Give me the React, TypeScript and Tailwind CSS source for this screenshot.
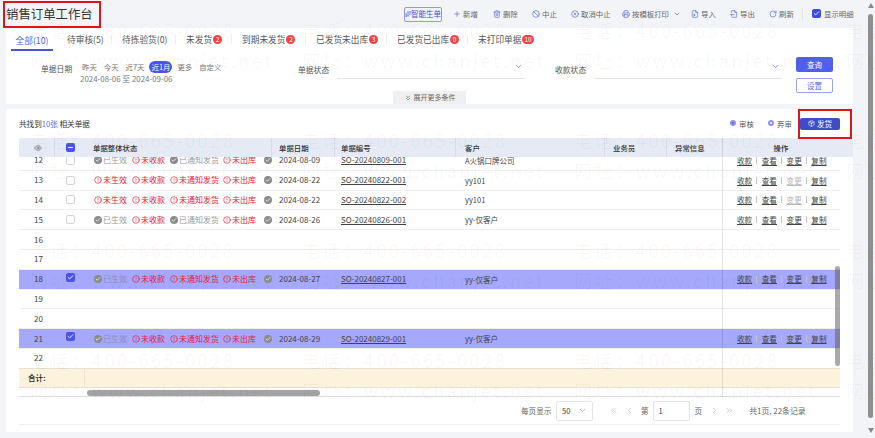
import React from 'react';
import {
  Ban,
  ChevronDown,
  ChevronLeft,
  ChevronRight,
  ChevronsDown,
  ChevronsLeft,
  ChevronsRight,
  CircleAlert,
  CircleX,
  Eye,
  FileInput,
  FileOutput,
  Minus,
  Check,
  Package,
  Plus,
  Printer,
  RotateCw,
  Sparkles,
  Trash2,
} from 'lucide-react';

const font = { fontFamily: '"Noto Sans CJK SC", "Noto Sans", sans-serif' };

const tools = [
  { label: '新增', icon: Plus, w: 'w-[40px]' },
  { label: '删除', icon: Trash2, w: 'w-[39px]' },
  { label: '中止', icon: Ban, w: 'w-[39px]' },
  { label: '取消中止', icon: CircleX, w: 'w-[51px]' },
  { label: '按模板打印', icon: Printer, w: 'w-[69px]', more: true },
  { label: '导入', icon: FileInput, w: 'w-[39px]' },
  { label: '导出', icon: FileOutput, w: 'w-[39px]' },
  { label: '刷新', icon: RotateCw, w: 'w-[33px]' },
];

const tabs = [
  { label: '待审核(5)', w: 'w-[55px]' },
  { label: '待拣验货(0)', w: 'w-[64px]' },
  { label: '未发货', badge: '2', w: 'w-[56px]' },
  { label: '到期未发货', badge: '2', w: 'w-[74px]' },
  { label: '已发货未出库', badge: '3', w: 'w-[81px]' },
  { label: '已发货已出库', badge: '0', w: 'w-[81px]' },
  { label: '未打印单据', badge: '10', w: 'w-[70px]' },
];

type Row = {
  no: number;
  checked?: boolean;
  status?: [boolean, boolean, boolean, boolean];
  date?: string;
  code?: string;
  customer?: string;
  changeOff?: boolean;
};

const rows: Row[] = [
  { no: 12, status: [true, false, true, false], date: '2024-08-09', code: 'SO-20240809-001', customer: 'A火锅口牌公司' },
  { no: 13, status: [false, false, false, false], date: '2024-08-22', code: 'SO-20240822-001', customer: 'yy101', changeOff: true },
  { no: 14, status: [false, false, false, false], date: '2024-08-22', code: 'SO-20240822-002', customer: 'yy101', changeOff: true },
  { no: 15, status: [true, false, true, false], date: '2024-08-26', code: 'SO-20240826-001', customer: 'yy-仅客户' },
  { no: 16 },
  { no: 17 },
  { no: 18, checked: true, status: [true, false, false, false], date: '2024-08-27', code: 'SO-20240827-001', customer: 'yy-仅客户' },
  { no: 19 },
  { no: 20 },
  { no: 21, checked: true, status: [true, false, false, false], date: '2024-08-29', code: 'SO-20240829-001', customer: 'yy-仅客户' },
  { no: 22 },
];

const statusNames = ['生效', '收款', '通知发货', '出库'];
const statusWidths = ['w-[38px]', 'w-[38px]', 'w-[53px]', 'w-[41px]'];
const cols = 'grid grid-cols-[36px_30px_187px_63px_121px_149px_62px_55px_118px]';

const DoneDot = () => (
  <span className="flex size-[8px] shrink-0 items-center justify-center rounded-full bg-[#8c8c8c]">
    <Check size={6} strokeWidth={3} className="text-white" />
  </span>
);

const StatusCell = ({ row }: { row: Row }) => (
  <div className="flex items-center pl-[9px]">
    {row.status?.map((done, i) => (
      <span key={i} className={`flex items-center gap-[1px] ${statusWidths[i]}`}>
        {done ? <DoneDot /> : <CircleAlert size={8} className="shrink-0 text-[#e5203a]" />}
        <span className={done ? (row.checked ? 'text-[#8c8cc0]' : 'text-[#9a9a9a]') : 'text-[#e5203a]'}>
          {(done ? '已' : '未') + statusNames[i]}
        </span>
      </span>
    ))}
    {row.status && <DoneDot />}
  </div>
);

const Sep = () => <span className="h-[7px] w-px bg-[#c4c4c4]" />;

const TableRow = ({ row }: { row: Row }) => (
  <div
    className={`${cols} h-[19.8px] shrink-0 items-center text-[8px] text-[#444] border-b border-[#efefef] first:-mt-[6px] ${
      row.checked ? 'bg-[#a6a8fb]' : 'bg-white'
    }`}
  >
    <span className="pl-[15px]">{row.no}</span>
    <span className="pl-[11px]">
      {row.checked ? (
        <span className="flex size-[9px] -translate-y-[2px] items-center justify-center rounded-[2px] bg-[#4a55e8]">
          <Check size={7} strokeWidth={3} className="text-white" />
        </span>
      ) : row.code ? (
        <span className="block size-[9px] rounded-[2px] border border-[#d4d4d4] bg-white" />
      ) : null}
    </span>
    <StatusCell row={row} />
    <span className="pl-[7px]">{row.date}</span>
    <span className="pl-[6px] underline">{row.code}</span>
    <span className="pl-[9px] text-[7.5px]">{row.customer}</span>
    <span />
    <span />
    {row.code ? (
      <span className="flex items-center gap-[4.3px] pl-[15px] text-[7.6px]">
        <span className="underline">收款</span>
        <Sep />
        <span className="underline">查看</span>
        <Sep />
        <span className={row.changeOff ? 'underline text-[#b5b5b5]' : 'underline'}>变更</span>
        <Sep />
        <span className="underline">复制</span>
      </span>
    ) : (
      <span />
    )}
  </div>
);

export default function App() {
  return (
    <div className="relative h-[438px] w-[875px] overflow-hidden bg-[#f3f4f7] text-[#444]" style={font}>
      {/* toolbar */}
      <header className="flex h-[28px] items-center pl-[6px]">
        <h1 className="w-[398px] text-[12.4px] text-[#333]">销售订单工作台</h1>
        <button className="flex h-[15px] w-[38px] items-center justify-center rounded-[2px] border border-[#8f97ef] text-[7.5px] text-[#3f4ce0]">
          <Sparkles size={6} />
          智能生单
        </button>
        <div className="ml-[11px] flex items-center text-[7.4px] text-[#666]">
          {tools.map(t => (
            <span key={t.label} className={`flex items-center gap-[2px] ${t.w}`}>
              <t.icon size={8} className="text-[#5a6ae0]" />
              {t.label}
              {t.more && <ChevronDown size={8} className="ml-[2px]" />}
            </span>
          ))}
        </div>
        <span className="h-[12px] w-px bg-[#e3e3e3]" />
        <span className="ml-[9px] flex items-center gap-[3px] text-[7.4px] text-[#666]">
          <span className="flex size-[9px] items-center justify-center rounded-[2px] bg-[#3f4ce0]">
            <Check size={7} strokeWidth={3} className="text-white" />
          </span>
          显示明细
        </span>
      </header>

      {/* filter panel */}
      <section className="relative ml-[6px] h-[76px] w-[847px] bg-white">
        <nav className="flex h-[23px] items-end pl-[5px] text-[8.7px] text-[#555]">
          <span className="h-[22px] w-[42px] border-b-2 border-[#4a55c8] pt-[5px] text-center text-[#4f5fe8]">全部(10)</span>
          <span className="w-[8px]" />
          {tabs.map((t, i) => (
            <span key={t.label} className={`relative flex h-[22px] items-center gap-[1px] pb-[1px] pl-[6px] ${t.w}`}>
              {t.label}
              {t.badge && (
                <span className="flex h-[9px] min-w-[9px] items-center justify-center rounded-full bg-[#ef4444] px-[2px] text-[6.5px] text-white">
                  {t.badge}
                </span>
              )}
              {i < tabs.length - 1 && <span className="absolute right-[4px] top-[6px] h-[9px] w-px bg-[#eeeeee]" />}
            </span>
          ))}
        </nav>
        <div className="flex pt-[10px]">
          <div className="flex w-[284px]">
            <span className="w-[67px] pl-[35px] pt-[2px] text-[7.8px] whitespace-nowrap text-[#555]">单据日期</span>
            <div className="pl-[9px] text-[7.4px] text-[#777]">
              <div className="flex h-[12px] items-center gap-[7px]">
                <span>昨天</span>
                <span>今天</span>
                <span>近7天</span>
                <span className="-mx-[2px] rounded-[6px] bg-[#4a55e8] px-[2px] text-white">近1月</span>
                <span>更多</span>
                <span>自定义</span>
              </div>
              <div className="-ml-[2px] text-[7.9px]">2024-08-06 至 2024-09-06</div>
            </div>
          </div>
          <span className="w-[39px] pl-[8px] pt-[3px] text-[7.8px] whitespace-nowrap text-[#555]">单据状态</span>
          <div className="ml-[8px] flex h-[18px] w-[188px] justify-end border-b border-[#e5e5e5] pr-[2px] pt-[1px]">
            <ChevronDown size={9} className="text-[#6a78e0]" />
          </div>
          <span className="ml-[24px] w-[45px] pl-[6px] pt-[3px] text-[7.8px] whitespace-nowrap text-[#555]">收款状态</span>
          <div className="flex h-[18px] w-[188px] justify-end border-b border-[#e5e5e5] pr-[2px] pt-[1px]">
            <ChevronDown size={9} className="text-[#6a78e0]" />
          </div>
          <div className="-mt-[4px] ml-[14px] flex flex-col gap-[6px]">
            <button className="h-[15px] w-[37px] rounded-[2px] bg-[#4f5ff0] text-[7.5px] text-white">查询</button>
            <button className="h-[15px] w-[37px] rounded-[2px] border border-[#98a2f0] text-[7.5px] text-[#5a68e8]">设置</button>
          </div>
        </div>
        <button className="absolute bottom-0 left-[387px] flex h-[13px] w-[73px] items-center justify-center gap-[2px] bg-[#f0f0f0] text-[7px] text-[#666]">
          <ChevronsDown size={8} />
          展开更多条件
        </button>
      </section>

      {/* list panel */}
      <section className="relative ml-[6px] mt-[5px] h-[323px] w-[847px] bg-white pl-[13px]">
        <div className="flex h-[29px] items-center">
          <span className="w-[711px] text-[7.6px] text-[#333]">
            共找到<span className="text-[#5a68e8]">10张</span> 相关单据
          </span>
          <span className="flex w-[38px] items-center gap-[3px] text-[7.4px] text-[#555]">
            <span className="size-[6px] rounded-full border-2 border-[#8a94f0] bg-[#5a68e8]" />
            审核
          </span>
          <span className="flex w-[32px] items-center gap-[3px] text-[7.4px] text-[#555]">
            <span className="size-[6px] rounded-full border-2 border-[#8a94f0] bg-white" />
            弃审
          </span>
          <button className="flex h-[12px] w-[40px] items-center justify-center gap-[2px] rounded-[2px] bg-[#3f4cc8] text-[7.6px] text-white">
            <Package size={7} />
            发货
          </button>
        </div>

        <div className={`${cols} h-[19px] items-center bg-[#e6eaf5] text-[7.4px] font-medium text-[#333]`}>
          <span className="flex h-full items-center border-r border-[#d8dcea] pl-[15px]">
            <Eye size={8} className="text-[#666]" />
          </span>
          <span className="pl-[11px]">
            <span className="flex size-[9px] items-center justify-center rounded-[2px] bg-[#4a55e8]">
              <Minus size={7} strokeWidth={3} className="text-white" />
            </span>
          </span>
          <span className="flex h-full items-center border-r border-[#d8dcea] pl-[8px]">单据整体状态</span>
          <span className="flex h-full items-center border-r border-[#d8dcea] pl-[7px]">单据日期</span>
          <span className="flex h-full items-center border-r border-[#d8dcea] pl-[6px]">单据编号</span>
          <span className="flex h-full items-center border-r border-[#d8dcea] pl-[9px]">客户</span>
          <span className="flex h-full items-center border-r border-[#d8dcea] pl-[8px]">业务员</span>
          <span className="pl-[8px] flex h-full items-center">异常信息</span>
          <span className="flex h-full items-center justify-center">操作</span>
        </div>

        <div className="flex h-[211px] w-[821px] flex-col overflow-hidden">
          {rows.map(r => (
            <TableRow key={r.no} row={r} />
          ))}
        </div>

        <div className="flex h-[20px] w-[821px] items-center border-y border-[#e5e0d0] bg-[#fdf2dc] text-[7.6px] font-medium text-[#222]">
          <span className="flex h-full w-[66px] items-center border-r border-[#eee3cc] pl-[9px]">合计:</span>
        </div>
        <div className="h-[9px] w-[821px] border-b border-[#ddd]" />

        <div className="flex h-[28px] w-[821px] items-center border-b border-[#f0f0f0] pl-[502px] text-[7.6px] text-[#666]">
          <span className="w-[35px]">每页显示</span>
          <span className="flex h-[20px] w-[37px] items-center justify-between rounded-[2px] border border-[#e5e5e5] px-[5px] text-[#444]">
            50
            <ChevronDown size={9} className="text-[#999]" />
          </span>
          <ChevronsLeft size={9} className="ml-[16px] text-[#bbb]" />
          <ChevronLeft size={9} className="ml-[7px] text-[#bbb]" />
          <span className="ml-[7px]">第</span>
          <span className="ml-[4px] flex h-[20px] w-[37px] items-center rounded-[2px] border border-[#e5e5e5] px-[5px] text-[#444]">1</span>
          <span className="ml-[5px]">页</span>
          <ChevronRight size={9} className="ml-[8px] text-[#bbb]" />
          <ChevronsRight size={9} className="ml-[6px] text-[#bbb]" />
          <span className="ml-[15px] text-[7.9px]">共1页, 22条记录</span>
        </div>

        {/* fixed column edge and table scrollbars */}
        <span className="absolute left-[716px] top-[29px] h-[259px] w-px bg-black/10" />
        <span className="absolute left-[829px] top-[157px] h-[100px] w-[5px] rounded-full bg-[#555]/50" />
        <span className="absolute left-[81px] top-[281px] h-[6px] w-[233px] rounded-full bg-[#a3a3a3]" />
      </section>

      {/* page scrollbar */}
      <div className="absolute left-[868px] top-[14px] h-[404px] w-[5px] rounded-full bg-[#8f8f8f]" />
      <div className="absolute left-[868px] top-[3px] size-0 border-x-[3px] border-b-[5px] border-x-transparent border-b-[#888]" />
      <div className="absolute left-[868px] top-[428px] size-0 border-x-[3px] border-t-[5px] border-x-transparent border-t-[#888]" />

      {/* red highlight marks */}
      <span className="absolute left-[3px] top-[1px] h-[27px] w-[98px] border-2 border-[#e01515]" />
      <span className="absolute left-[798px] top-[109px] h-[30px] w-[54px] border-2 border-[#e01515]" />

      {/* watermark */}
      <div className="pointer-events-none absolute left-[30px] top-[15px] grid w-[1088px] grid-cols-[repeat(4,272px)] auto-rows-[110px] text-[18px] leading-[30px] tracking-[2.6px] whitespace-nowrap text-black/[0.035]">
        {Array.from({ length: 16 }).map((_, i) => (
          <div key={i}>
            <div>电话：400-665-0028</div>
            <div>网址：www.chanjet.net</div>
          </div>
        ))}
      </div>
    </div>
  );
}
